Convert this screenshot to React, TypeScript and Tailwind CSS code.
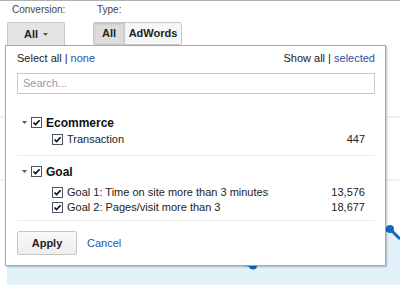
import React from "react";

type Goal = {
  name: string;
  count: string;
};

type Group = {
  name: string;
  goals: Goal[];
};

const groups: Group[] = [
  { name: "Ecommerce", goals: [{ name: "Transaction", count: "447" }] },
  {
    name: "Goal",
    goals: [
      { name: "Goal 1: Time on site more than 3 minutes", count: "13,576" },
      { name: "Goal 2: Pages/visit more than 3", count: "18,677" },
    ],
  },
];

function Check() {
  return (
    <svg width="11" height="11" viewBox="0 0 11 11" className="shrink-0">
      <rect x="0.5" y="0.5" width="10" height="10" fill="#fff" stroke="#4a5565" />
      <path d="M2.5 5.5 L4.6 7.6 L8.6 3.2" fill="none" stroke="#111" strokeWidth="1.7" />
    </svg>
  );
}

function Caret() {
  return (
    <svg width="5" height="3" viewBox="0 0 5 3" className="shrink-0">
      <path d="M0 0 H5 L2.5 3 Z" fill="#555" />
    </svg>
  );
}

function Chart() {
  return (
    <svg className="absolute inset-0" width="400" height="285" viewBox="0 0 400 285">
      <line x1="0" y1="116" x2="400" y2="116" stroke="#e2e2e2" />
      <line x1="0" y1="179" x2="400" y2="179" stroke="#e2e2e2" />
      <polygon points="7,285 7,240 253,264.5 390,228 400,238 400,285" fill="#e1f1f9" />
      <polyline points="7,240 253,264.5 390,228 400,238" fill="none" stroke="#0e6cbf" strokeWidth="3" />
      <circle cx="253" cy="264.5" r="4" fill="#0e6cbf" />
      <circle cx="390" cy="228" r="4" fill="#0e6cbf" />
    </svg>
  );
}

export default function App() {
  return (
    <div className="relative w-[400px] h-[285px] overflow-hidden bg-white border-t border-[#b0b0b0] font-['Liberation_Sans',Arial,sans-serif] text-[11px] text-[#222]">
      <Chart />

      {/* toolbar */}
      <div className="relative z-20 flex pt-[1px]">
        <div className="ml-[7px] w-[58px]">
          <div className="pl-[5px] text-[10px] leading-[16px] text-[#444]">Conversion:</div>
          <div className="mt-[4px] h-[23px] flex items-center justify-center gap-[5px] bg-[#e3e3e3] border border-b-0 border-[#c8c8c8] rounded-t-[2px] font-bold">
            All <Caret />
          </div>
        </div>

        <div className="ml-[28px]">
          <div className="pl-[4px] text-[10px] leading-[16px] text-[#444]">Type:</div>
          <div className="mt-[4px] h-[23px] flex border border-[#c8c8c8] rounded-[2px] font-bold">
            <div className="w-[30px] flex items-center justify-center bg-[#dcdcdc] shadow-[inset_0_1px_2px_rgba(0,0,0,0.15)]">All</div>
            <div className="w-[57px] flex items-center justify-center bg-[#f6f6f6] border-l border-[#c8c8c8]">AdWords</div>
          </div>
        </div>
      </div>

      {/* dropdown */}
      <div className="absolute z-10 left-[5px] top-[44px] w-[381px] h-[221px] bg-white border border-[#a8a8a8] shadow-[1px_1px_2px_rgba(0,0,0,0.25)] pl-[11px] pr-[10px] pt-[4px]">
        <div className="flex justify-between leading-[16px]">
          <span>
            Select all | <span className="text-[#2a52a8]">none</span>
          </span>
          <span>
            Show all | <span className="text-[#2a52a8]">selected</span>
          </span>
        </div>

        <div className="mt-[7px] h-[21px] border border-[#c9c9c9] flex items-center pl-[5px] text-[#999]">
          Search...
        </div>

        {groups.map((group, gi) => (
          <div key={group.name}>
            <div className={`flex items-center h-[15px] ${gi === 0 ? "mt-[21px]" : "mt-[8px]"}`}>
              <span className="ml-[5px]"><Caret /></span>
              <span className="ml-[4px]"><Check /></span>
              <span className="ml-[4px] text-[12px] font-bold text-[#111]">{group.name}</span>
            </div>
            {group.goals.map((goal, i) => (
              <div
                key={goal.name}
                className={`flex items-center h-[15px] pl-[35px] pr-[10px] ${i === 0 ? (gi === 0 ? "mt-[2px]" : "mt-[6px]") : ""}`}
              >
                <Check />
                <span className="ml-[4px]">{goal.name}</span>
                <span className="ml-auto">{goal.count}</span>
              </div>
            ))}
            <div className={`h-px bg-[#ebebeb] ${gi === 0 ? "mt-[8px]" : "mt-[5px]"}`} />
          </div>
        ))}

        <div className="mt-[10px] flex items-center">
          <div className="w-[60px] h-[24px] flex items-center justify-center rounded-[2px] border border-[#c6c6c6] bg-gradient-to-b from-[#f8f8f8] to-[#eeeeee] font-bold text-[#222]">
            Apply
          </div>
          <span className="ml-[10px] text-[#2a52a8]">Cancel</span>
        </div>
      </div>
    </div>
  );
}
